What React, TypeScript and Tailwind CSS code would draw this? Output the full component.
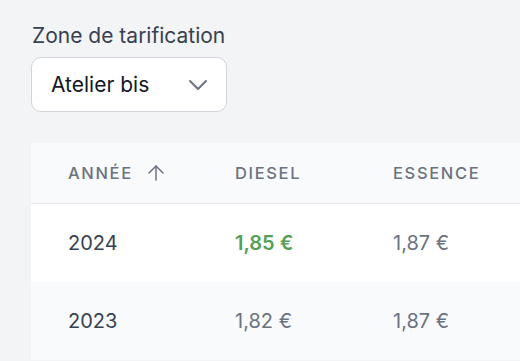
import { ChevronDown, ArrowUp } from 'lucide-react';

const rows = [
  { year: '2024', diesel: '1,85 €', essence: '1,87 €', best: true },
  { year: '2023', diesel: '1,82 €', essence: '1,87 €', best: false },
];

export default function App() {
  return (
    <div className="min-h-screen w-full overflow-hidden bg-[#f3f4f6] font-['Inter',sans-serif]">
      <div className="pt-[22px] pl-[31px]">
        <label className="block pl-[1px] text-[21px] leading-[28px] text-[#374151]">
          Zone de tarification
        </label>
        <button className="mt-[7px] flex h-[55px] w-[196px] items-center justify-between rounded-[10px] border border-[#d1d5db] bg-white pl-[19px] pr-[12px] text-[21px] text-[#111827]">
          <span>Atelier bis</span>
          <ChevronDown className="h-[32px] w-[32px] text-[#6b7280]" strokeWidth={1.5} />
        </button>

        <div className="mt-[31px] w-[560px]">
          {/* Header */}
          <div className="grid h-[61px] grid-cols-[167px_158px_1fr] items-center border-b border-[#e5e7eb] bg-[#f9fafb] text-[16.5px] font-medium uppercase tracking-[0.1em] text-[#6b7280]">
            <div className="flex items-center gap-[11px] pl-[37px]">
              <span>Année</span>
              <ArrowUp className="h-[24px] w-[24px]" strokeWidth={1.5} />
            </div>
            <div className="pl-[37px]">Diesel</div>
            <div className="pl-[37px]">Essence</div>
          </div>

          {rows.map((r, i) => (
            <div
              key={r.year}
              className={`grid h-[78px] grid-cols-[167px_158px_1fr] items-center text-[20px] ${i % 2 === 0 ? 'bg-white' : 'bg-[#f9fafb]'}`}
            >
              <div className="pl-[37px] text-[#374151]">{r.year}</div>
              <div className={`pl-[37px] ${r.best ? 'font-semibold text-[#53a056]' : 'text-[#6b7280]'}`}>{r.diesel}</div>
              <div className="pl-[37px] text-[#6b7280]">{r.essence}</div>
            </div>
          ))}
        </div>
      </div>
    </div>
  );
}
